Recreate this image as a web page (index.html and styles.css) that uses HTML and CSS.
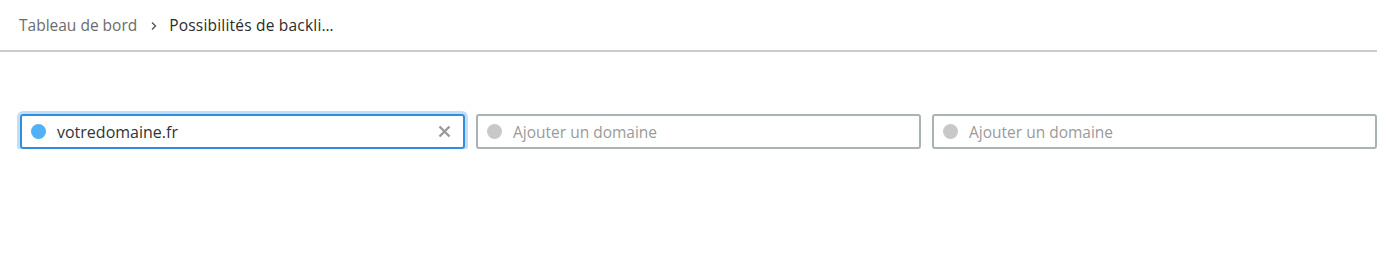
FILE: index.html
```html
<!DOCTYPE html>
<html lang="fr">
<head>
<meta charset="utf-8">
<link rel="stylesheet" href="styles.css">
</head>
<body>
<header class="topbar">
  <nav class="crumbs">
    <a class="crumb crumb-link">Tableau de bord</a>
    <svg class="chev" width="8" height="10" viewBox="0 0 8 10"><path d="M2 1.5 L5.5 5 L2 8.5" fill="none" stroke="#555" stroke-width="1.4"/></svg>
    <span class="crumb crumb-current">Possibilités de backli…</span>
  </nav>
</header>
<main class="domains">
  <div class="field field-focus">
    <span class="dot dot-blue"></span>
    <span class="value">votredomaine.fr</span>
    <svg class="clear" width="13" height="13" viewBox="0 0 13 13"><path d="M1.5 1.5 L11.5 11.5 M11.5 1.5 L1.5 11.5" stroke="#9a9a9a" stroke-width="2.4"/></svg>
  </div>
  <div class="field">
    <span class="dot"></span>
    <span class="placeholder">Ajouter un domaine</span>
  </div>
  <div class="field">
    <span class="dot"></span>
    <span class="placeholder">Ajouter un domaine</span>
  </div>
</main>
</body>
</html>
```
FILE: styles.css
```css
html, body {
  margin: 0;
  padding: 0;
  background: #fff;
  font-family: "Open Sans", "Noto Sans", sans-serif;
}
.topbar {
  width: 1377px;
  height: 50px;
  border-bottom: 2px solid #cccccc;
  box-sizing: content-box;
}
.crumbs {
  display: flex;
  align-items: center;
  height: 50px;
  padding-left: 19px;
  font-size: 15.5px;
}
.crumb-link { color: #6c6c6c; }
.chev { margin: 1px 11px 0 13px; }
.crumb-current { color: #2b2b2b; letter-spacing: 0.2px; }
.domains {
  display: grid;
  grid-template-columns: repeat(3, 1fr);
  column-gap: 11px;
  width: 1357px;
  padding: 62px 0 0 20px;
}
.field {
  height: 35px;
  box-sizing: border-box;
  border: 2px solid #a9b2b5;
  border-radius: 3px;
  display: flex;
  align-items: center;
  padding: 0 10px 0 9px;
  font-size: 16px;
}
.field-focus {
  border-color: #2f8fde;
  box-shadow: 0 0 0 3px #c3def6;
}
.dot {
  width: 15px;
  height: 15px;
  border-radius: 50%;
  background: #c8c8c8;
  flex: none;
  margin-right: 11px;
}
.dot-blue { background: #52b0f6; }
.value { color: #333; flex: 1; }
.placeholder { color: #9a9a9a; flex: 1; font-size: 15.5px; }
.clear { flex: none; margin-right: 2px; }
```
